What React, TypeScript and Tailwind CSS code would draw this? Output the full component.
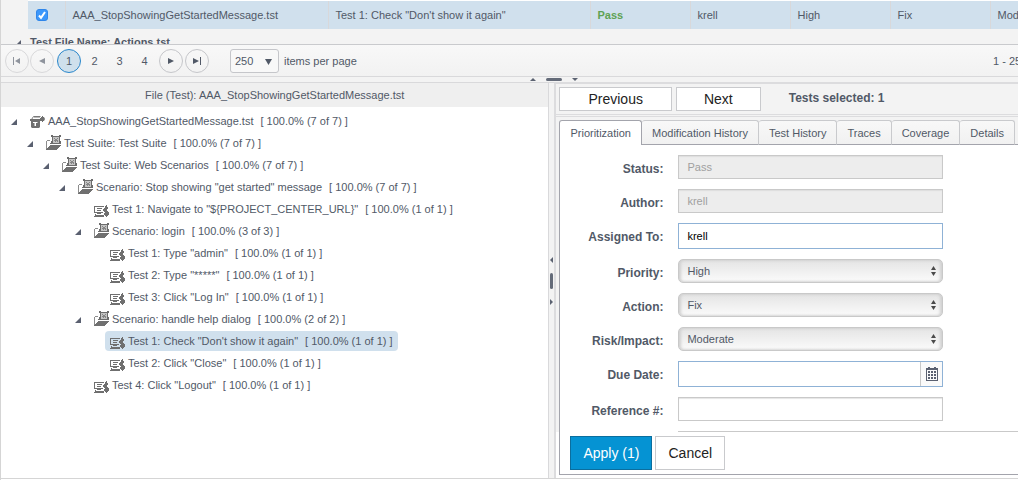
import type { ReactNode } from "react";
import { clsx } from "clsx";

type NodeKind = "file" | "folder" | "test";

interface TreeNode {
  name: string;
  count: string;
  kind: NodeKind;
  level: number;
  selected?: boolean;
}

const nodes: TreeNode[] = [
  { name: "AAA_StopShowingGetStartedMessage.tst", count: "7 of 7", kind: "file", level: 0 },
  { name: "Test Suite: Test Suite", count: "7 of 7", kind: "folder", level: 1 },
  { name: "Test Suite: Web Scenarios", count: "7 of 7", kind: "folder", level: 2 },
  { name: 'Scenario: Stop showing "get started" message', count: "7 of 7", kind: "folder", level: 3 },
  { name: 'Test 1: Navigate to "${PROJECT_CENTER_URL}"', count: "1 of 1", kind: "test", level: 4 },
  { name: "Scenario: login", count: "3 of 3", kind: "folder", level: 4 },
  { name: 'Test 1: Type "admin"', count: "1 of 1", kind: "test", level: 5 },
  { name: 'Test 2: Type "*****"', count: "1 of 1", kind: "test", level: 5 },
  { name: 'Test 3: Click "Log In"', count: "1 of 1", kind: "test", level: 5 },
  { name: "Scenario: handle help dialog", count: "2 of 2", kind: "folder", level: 4 },
  { name: 'Test 1: Check "Don\'t show it again"', count: "1 of 1", kind: "test", level: 5, selected: true },
  { name: 'Test 2: Click "Close"', count: "1 of 1", kind: "test", level: 5 },
  { name: 'Test 4: Click "Logout"', count: "1 of 1", kind: "test", level: 4 },
];

const indents = ["pl-2", "pl-6", "pl-10", "pl-14", "pl-[72px]", "pl-[88px]"];

const tabs = ["Prioritization", "Modification History", "Test History", "Traces", "Coverage", "Details"];

export default function App() {
  return (
    <div className="flex h-screen min-h-[480px] flex-col overflow-hidden border-l border-[#d5d5d5] bg-white pb-px font-['Liberation_Sans',Arial,sans-serif] text-[11px] leading-4 text-[#515967]">
      <ResultsTable />
      <Pager />
      <HorizontalSplitter />
      <main className="grid min-h-0 flex-1 grid-cols-[137fr_6px_116fr] border-b border-[#d5d5d5]">
        <TestTree />
        <VerticalSplitter />
        <DetailsPane />
      </main>
    </div>
  );
}

function ResultsTable() {
  return (
    <div className="h-11 shrink-0 overflow-hidden bg-[#f3f3f3]">
      <table className="w-[1189px] table-fixed border-collapse text-left">
        <colgroup>
          <col className="w-[27px]" />
          <col className="w-[37px]" />
          <col className="w-[263px]" />
          <col className="w-[262px]" />
          <col className="w-[100px]" />
          <col className="w-[100px]" />
          <col className="w-[100px]" />
          <col className="w-[100px]" />
          <col className="w-[200px]" />
        </colgroup>
        <tbody>
          <tr className="h-7">
            <td />
            <td className="border-t border-white bg-[#d0e0ed] px-2">
              <span className="relative block size-3">
                <input
                  type="checkbox"
                  aria-label="Select test"
                  defaultChecked
                  className="peer block size-3 appearance-none rounded-[3px] border border-[#9aa0a8] bg-white checked:border-[#2f86ea] checked:bg-[#3b97fb]"
                />
                <svg
                  viewBox="0 0 12 12"
                  className="pointer-events-none absolute inset-0 hidden size-3 fill-none stroke-white stroke-2 peer-checked:block"
                >
                  <path d="M3 6.500l2 2.300L9 3" />
                </svg>
              </span>
            </td>
            <Cell>AAA_StopShowingGetStartedMessage.tst</Cell>
            <Cell>Test 1: Check "Don't show it again"</Cell>
            <Cell>
              <b className="text-[#5fa253]">Pass</b>
            </Cell>
            <Cell>krell</Cell>
            <Cell>High</Cell>
            <Cell>Fix</Cell>
            <Cell>Moderate</Cell>
          </tr>
          <tr className="h-7">
            <td colSpan={9} className="pb-0.5 pl-3.5">
              <span className="flex items-center gap-[9px] font-bold">
                <Expander />
                Test File Name: Actions.tst
              </span>
            </td>
          </tr>
        </tbody>
      </table>
    </div>
  );
}

function Cell({ children }: { children: ReactNode }) {
  return (
    <td className="border-t border-l border-t-white border-l-[#d8d8da] bg-[#d0e0ed] pr-1.5 pl-[7px] whitespace-nowrap">
      {children}
    </td>
  );
}

function Pager() {
  return (
    <nav className="flex h-8 shrink-0 items-start border-t border-[#c9cacd] bg-linear-to-b from-[#f8f8f8] to-[#f2f2f2] pt-1 pl-1 whitespace-nowrap">
      <PagerButton label="First page" disabled>
        <path d="M0 0h1v8H0zM7 1v6L2 4z" />
      </PagerButton>
      <PagerButton label="Previous page" disabled className="ml-px">
        <path d="M7 1v6L1 4z" />
      </PagerButton>
      <button className="mx-[3px] mr-px size-6 rounded-full border border-[#2a87cb] bg-[#cfe0ec]">1</button>
      {[2, 3, 4].map((page) => (
        <button key={page} className="h-6 w-[25px]">
          {page}
        </button>
      ))}
      <PagerButton label="Next page" className="ml-0.5">
        <path d="M1 1v6l6-3z" />
      </PagerButton>
      <PagerButton label="Last page" className="ml-0.5">
        <path d="M0 1v6l6-3zM7 0h1v8H7z" />
      </PagerButton>
      <span className="relative ml-[21px]">
        <select
          aria-label="items per page"
          className="block h-6 w-[49px] appearance-none rounded-[3px] border border-[#c5c6ca] bg-[#f8f8f8] pl-1"
        >
          <option>250</option>
        </select>
        <svg viewBox="0 0 7 6" className="pointer-events-none absolute top-2.5 right-[7px] h-1.5 w-[7px] fill-[#515967]">
          <path d="M0 0h7L3.500 6z" />
        </svg>
      </span>
      <span className="ml-[5px] leading-6">items per page</span>
      <span className="ml-auto w-[25px] leading-6">1 - 250</span>
    </nav>
  );
}

interface PagerButtonProps {
  label: string;
  disabled?: boolean;
  className?: string;
  children: ReactNode;
}

function PagerButton({ label, disabled, className, children }: PagerButtonProps) {
  return (
    <button
      aria-label={label}
      disabled={disabled}
      className={clsx(
        "flex size-6 items-center justify-center rounded-full border",
        disabled ? "border-[#d8d8da] fill-[#8f949d]" : "border-[#c5c6ca] fill-[#515967]",
        className,
      )}
    >
      <svg viewBox="0 0 8 8" className="size-2">
        {children}
      </svg>
    </button>
  );
}

function HorizontalSplitter() {
  return (
    <div className="flex h-1.5 shrink-0 items-center gap-2.5 border-t border-[#d9d9db] bg-[#f3f3f3] pl-[52%]">
      <svg viewBox="0 0 6 3" className="h-[3px] w-1.5 fill-[#5b6271]">
        <path d="M0 3h6L3 0z" />
      </svg>
      <span className="h-[3px] w-4 rounded-sm bg-[#646b79]" />
      <svg viewBox="0 0 6 3" className="h-[3px] w-1.5 fill-[#5b6271]">
        <path d="M0 0h6L3 3z" />
      </svg>
    </div>
  );
}

function VerticalSplitter() {
  return (
    <div className="flex flex-col items-center justify-center gap-2.5 border-t border-l border-[#d9d9db] bg-[#f3f3f3]">
      <svg viewBox="0 0 3 6" className="h-1.5 w-[3px] fill-[#5b6271]">
        <path d="M3 0v6L0 3z" />
      </svg>
      <span className="h-4 w-[3px] rounded-sm bg-[#646b79]" />
      <svg viewBox="0 0 3 6" className="h-1.5 w-[3px] fill-[#5b6271]">
        <path d="M0 0v6l3-3z" />
      </svg>
    </div>
  );
}

function TestTree() {
  return (
    <section className="min-w-0 overflow-hidden border-t border-[#d9d9db] whitespace-nowrap">
      <h2 className="h-6 bg-[#efefef] text-center leading-6">File (Test): AAA_StopShowingGetStartedMessage.tst</h2>
      <ul className="pt-[3px]">
        {nodes.map((node, idx) => (
          <li key={idx} className={clsx("flex h-[22px] items-center", indents[node.level])}>
            <span className="w-4 pl-0.5">{node.kind !== "test" && <Expander />}</span>
            <span
              className={clsx("flex h-5 items-center gap-0.5 rounded-[4px] px-[5px]", node.selected && "bg-[#d0e0ed]")}
            >
              <NodeIcon kind={node.kind} />
              <span className="flex gap-[7px]">
                <span>{node.name}</span>
                <span>[ 100.0% ({node.count}) ]</span>
              </span>
            </span>
          </li>
        ))}
      </ul>
    </section>
  );
}

function Expander() {
  return (
    <svg viewBox="0 0 6 6" className="mt-0.5 size-1.5 shrink-0 fill-[#5a6070]">
      <path d="M6 0v6H0z" />
    </svg>
  );
}

function NodeIcon({ kind }: { kind: NodeKind }) {
  if (kind === "file") {
    return (
      <svg viewBox="0 0 16 16" className="mt-1 size-4 shrink-0">
        <path d="M1.500 4.500L3.500 1.500h7" fill="none" stroke="#7a7a7a" />
        <path fill="#b9b9b9" d="M4 2h6v1H4z" />
        <path
          fill="#6f6f6f"
          fillRule="evenodd"
          d="M0 4h11v2h-1v6l-1 1H2l-1-1V6H0zM3 7v1h1.500v3h1.500V8h1.500V7z"
        />
        <path fill="#6f6f6f" d="M12 1h1v1h1l1 2-1 2h-1v1h-1V6h-1V5h-1V3h1V2h1z" />
      </svg>
    );
  }
  if (kind === "folder") {
    return (
      <svg viewBox="0 0 16 16" shapeRendering="crispEdges" className="size-4 shrink-0">
        <path fill="#8c8c8c" d="M0 6h1v8H0zM1 5h3v1H1z" />
        <path fill="#707070" d="M4 10h11v1h-1v1h-1v1h-1v1h-1v1H0v-1h1v-1h1v-1h1v-1h1z" />
        <path fill="#c4c4c4" d="M6 1h8v7H6z" />
        <path
          fill="#6c6c6c"
          d="M5 0h2v2H5zM13 0h2v2h-2zM7 1h6v1H7zM6 2h1v4H6zM13 2h1v4h-1zM5 6h2v2H5zM13 6h2v2h-2zM4 8h11v1H4z"
        />
        <path fill="#858585" d="M8 3h1v1H8zM11 3h1v1h-1zM9 4h2v1H9zM8 5h4v1H8zM9 6h1v1H9zM11 6h1v1h-1z" />
      </svg>
    );
  }
  return (
    <svg viewBox="0 0 16 16" shapeRendering="crispEdges" className="mt-1 size-4 shrink-0">
      <path
        fill="#6f6f6f"
        d="M0 3h10v1H0zM0 4h1v6H0zM1 9h8v1H1zM3 5h5v1H3zM3 7h4v1H3zM3 10h4v1H3zM1 11h1v1H1zM1 12h9v1H1zM0 13h10v1H0z"
      />
      <path
        fill="#6f6f6f"
        d="M12 2h1v2h1v2h-1v2h1v1h1v3h-1v1h-1v1h-1v-1h-1v-1h-1v-2h1V9h-1V8H9V6h1V5h1V3h1z"
      />
    </svg>
  );
}

function DetailsPane() {
  return (
    <section className="flex min-w-0 flex-col overflow-hidden border-t-2 border-l-2 border-[#dcdcde]">
      <div className="flex min-h-0 flex-1 flex-col bg-[#f3f3f3] pl-[3px]">
        <div className="-ml-[3px] flex gap-1 border-b border-[#dcdcde] py-[3px] pl-[3px]">
          <PlainButton className="h-6 px-7">Previous</PlainButton>
          <PlainButton className="h-6 px-[27px]">Next</PlainButton>
          <strong className="ml-6 text-xs leading-[22px]">Tests selected: 1</strong>
        </div>
        <div className="mt-px -ml-[3px] h-1 border-t border-[#dcdcde]" />
        <div role="tablist" className="flex whitespace-nowrap">
          {tabs.map((tab, idx) => (
            <button
              key={tab}
              role="tab"
              aria-selected={idx === 0}
              className={clsx(
                "h-[25px] rounded-t-[3px] border-t px-2.5",
                idx === 0
                  ? "border-x border-[#a3a4ac] bg-white"
                  : "border-r border-b border-t-[#c9cacd] border-r-[#c9cacd] border-b-[#a3a4ac] bg-linear-to-b from-[#f8f8f8] to-[#f1f1f1]",
              )}
            >
              {tab}
            </button>
          ))}
          <span className="flex-1 border-b border-[#a3a4ac]" />
        </div>
        <PriorityForm />
      </div>
      <div className="bg-white pb-[3px] pl-[3px]">
        <div className="flex gap-[3px] border-b border-l border-[#a3a4ac] py-1 pl-2.5">
          <button className="h-[34px] border border-[#0b6e9e] bg-[#0593d3] px-3 text-sm text-white">Apply (1)</button>
          <PlainButton className="h-[34px] px-3">Cancel</PlainButton>
        </div>
      </div>
    </section>
  );
}

function PlainButton({ className, children }: { className?: string; children: ReactNode }) {
  return (
    <button className={clsx("border border-[#c9cacd] bg-white text-sm text-[#222]", className)}>{children}</button>
  );
}

function PriorityForm() {
  const box = "block w-full border px-2";
  const readOnly = "h-6 border-[#c9c9c9] bg-[#ededed] text-[#a0a0a0] shadow-[inset_0_1px_1px_#ddd]";
  return (
    <form className="grid min-h-0 flex-1 auto-rows-min grid-cols-[103px_265px_minmax(0,1fr)] gap-y-2.5 overflow-hidden border-l border-[#a3a4ac] bg-white pt-2.5">
      <Field id="status" label="Status:">
        <input id="status" disabled defaultValue="Pass" className={clsx(box, readOnly)} />
      </Field>
      <Field id="author" label="Author:">
        <input id="author" disabled defaultValue="krell" className={clsx(box, readOnly)} />
      </Field>
      <Field id="assigned" label="Assigned To:">
        <input id="assigned" defaultValue="krell" className={clsx(box, "h-[26px] border-[#8fb2d6] text-black")} />
      </Field>
      <Field id="priority" label="Priority:">
        <SelectBox id="priority" value="High" />
      </Field>
      <Field id="action" label="Action:">
        <SelectBox id="action" value="Fix" />
      </Field>
      <Field id="risk" label="Risk/Impact:">
        <SelectBox id="risk" value="Moderate" />
      </Field>
      <Field id="due" label="Due Date:">
        <div className="flex h-[26px] border border-[#8fb2d6]">
          <input id="due" className="min-w-0 flex-1 px-2 text-black" />
          <button
            type="button"
            aria-label="Open calendar"
            className="flex w-[22px] items-center justify-center border-l border-[#c9c9c9] bg-[#fafafa]"
          >
            <svg viewBox="0 0 12 14" shapeRendering="crispEdges" className="h-3.5 w-3 fill-[#5a6070]">
              <path
                fillRule="evenodd"
                d="M2 0h2v1h4V0h2v1h2v13H0V1h2zM1 3v10h10V3zM2 4h2v2H2zM5 4h2v2H5zM8 4h2v2H8zM2 7h2v2H2zM5 7h2v2H5zM8 7h2v2H8zM2 10h2v2H2zM5 10h2v2H5zM8 10h2v2H8z"
              />
            </svg>
          </button>
        </div>
      </Field>
      <Field id="reference" label="Reference #:">
        <input
          id="reference"
          className={clsx(box, "h-6 border-[#c9c9c9] text-black shadow-[inset_0_1px_1px_#e5e5e5]")}
        />
      </Field>
      <textarea
        aria-label="Comments"
        className="col-span-2 col-start-2 ml-[15px] h-20 resize-none border border-[#c9c9c9] px-2"
      />
    </form>
  );
}

function Field({ id, label, children }: { id: string; label: string; children: ReactNode }) {
  return (
    <>
      <label htmlFor={id} className="pt-1.5 text-right text-xs leading-4 font-bold">
        {label}
      </label>
      <div className="ml-[15px] w-[265px]">{children}</div>
      <span />
    </>
  );
}

function SelectBox({ id, value }: { id: string; value: string }) {
  return (
    <div className="relative">
      <select
        id={id}
        className="block h-6 w-full appearance-none rounded-[5px] border border-[#c9c9c9] bg-linear-to-b from-[#e4e4e4] to-[#fbfbfb] px-2 shadow-[inset_2px_0_3px_#d0d0d0,inset_-2px_0_3px_#d0d0d0]"
      >
        <option>{value}</option>
      </select>
      <svg viewBox="0 0 5 10" className="pointer-events-none absolute top-[7px] right-[7px] h-2.5 w-[5px] fill-[#4a4a4a]">
        <path d="M0 4h5L2.500 0zM0 6h5l-2.500 4z" />
      </svg>
    </div>
  );
}
